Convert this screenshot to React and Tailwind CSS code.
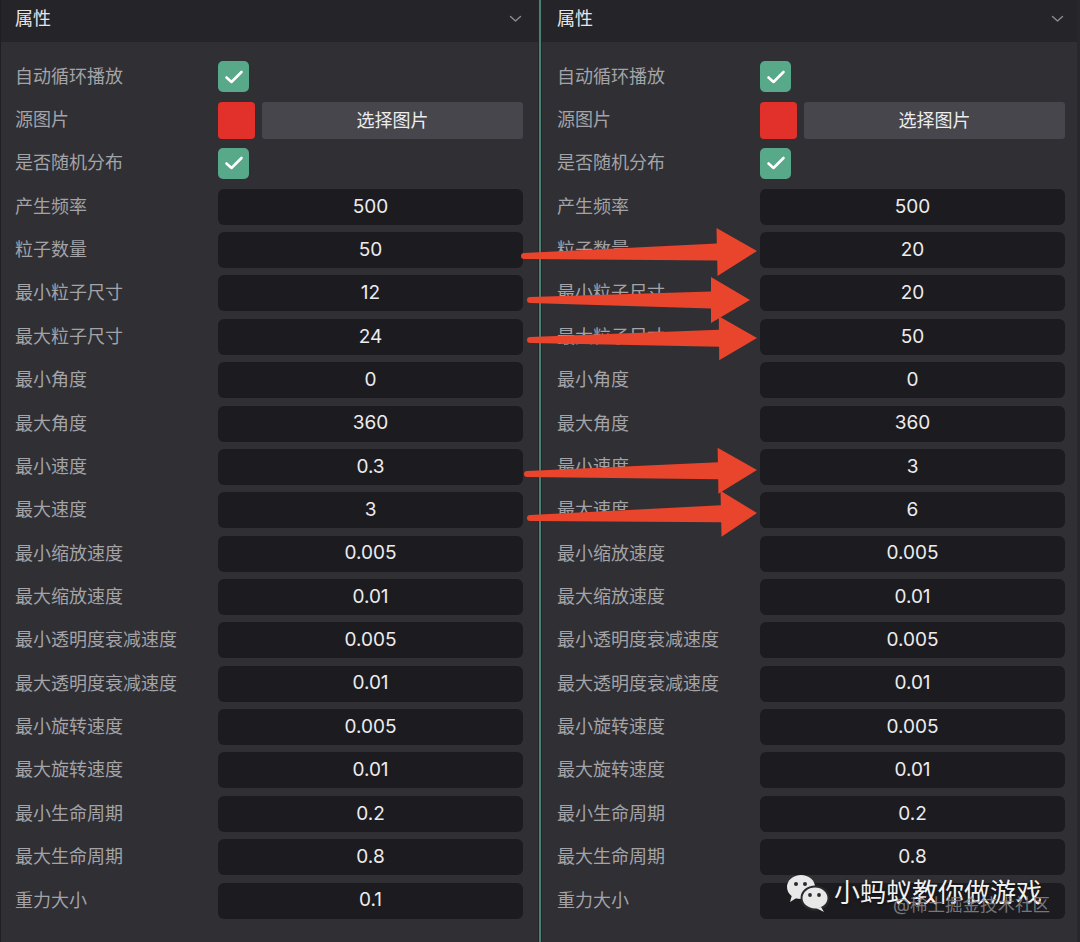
import React from "react";

const labels = [
  "自动循环播放", "源图片", "是否随机分布", "产生频率", "粒子数量", "最小粒子尺寸", "最大粒子尺寸",
  "最小角度", "最大角度", "最小速度", "最大速度", "最小缩放速度", "最大缩放速度",
  "最小透明度衰减速度", "最大透明度衰减速度", "最小旋转速度", "最大旋转速度",
  "最小生命周期", "最大生命周期", "重力大小",
];
const leftVals = [null, null, null, "500", "50", "12", "24", "0", "360", "0.3", "3", "0.005", "0.01", "0.005", "0.01", "0.005", "0.01", "0.2", "0.8", "0.1"];
const rightVals = [null, null, null, "500", "20", "20", "50", "0", "360", "3", "6", "0.005", "0.01", "0.005", "0.01", "0.005", "0.01", "0.2", "0.8", ""];

function Check() {
  return (
    <div className="w-[31px] h-[31px] rounded-[5px] bg-[#58a88a] flex items-center justify-center">
      <svg width="20" height="16" viewBox="0 0 20 16">
        <path d="M2.5 8.5 L7.5 13 L17.5 3" fill="none" stroke="#ffffff" strokeWidth="2.6" strokeLinecap="round" strokeLinejoin="round" />
      </svg>
    </div>
  );
}

function Panel({ vals, right }) {
  return (
    <div className={"w-[538px] shrink-0 flex flex-col bg-[#2f2f34] " + (right ? "border-r-[3px] border-[#28282c]" : "border-l border-[#1f1f23]")}>
      <div className={"h-[42px] bg-[#242429] flex items-center justify-between pb-[5px] " + (right ? "pl-[15px] pr-[13px]" : "pl-[14px] pr-[16px]")}>
        <span className="text-[18px] text-[#e6e6e8]">属性</span>
        <svg width="13" height="8" viewBox="0 0 13 8">
          <path d="M1.5 1.5 L6.5 6 L11.5 1.5" fill="none" stroke="#8c8c92" strokeWidth="1.4" strokeLinecap="round" strokeLinejoin="round" />
        </svg>
      </div>
      <div className={"flex flex-col pt-[13px] " + (right ? "pl-[15px] pr-[12px]" : "pl-[14px] pr-[15px]")}>
        {labels.map((l, i) => (
          <div key={i} className="h-[43.37px] flex items-center">
            <div className="w-[203px] text-[18px] text-[#a3a3a8] whitespace-nowrap leading-none">{l}</div>
            <div className="flex-1 flex items-center">
              {i === 0 || i === 2 ? (
                <Check />
              ) : i === 1 ? (
                <div className="flex-1 flex items-center gap-[7px]">
                  <div className="w-[37px] h-[37px] rounded-[4px] bg-[#e2302a]" />
                  <div className="flex-1 h-[37px] rounded-[3px] bg-[#46464c] flex items-center justify-center text-[18px] text-[#ececee]">选择图片</div>
                </div>
              ) : (
                <div className="flex-1 h-[36px] rounded-[6px] bg-[#1c1c20] flex items-center justify-center text-[19px] text-[#ececee]">{vals[i]}</div>
              )}
            </div>
          </div>
        ))}
      </div>
    </div>
  );
}

function arrowPts(x1, y1, x2, y2, L, H) {
  const dx = x2 - x1, dy = y2 - y1;
  const len = Math.hypot(dx, dy);
  const ux = dx / len, uy = dy / len;
  const nx = -uy, ny = ux;
  const bx = x2 - ux * L, by = y2 - uy * L;
  const t0 = 3, t1 = 8.5;
  const p = [
    [x1 + nx * t0, y1 + ny * t0],
    [bx + nx * t1, by + ny * t1],
    [bx + nx * H, by + ny * H],
    [x2, y2],
    [bx - nx * H, by - ny * H],
    [bx - nx * t1, by - ny * t1],
    [x1 - nx * t0, y1 - ny * t0],
  ];
  return p.map((q) => q[0].toFixed(1) + "," + q[1].toFixed(1)).join(" ");
}

const arrows = [
  [524, 256, 757, 251, 40, 24],
  [530, 300, 750, 300, 39, 23],
  [530, 340, 757, 338, 38, 22],
  [527, 474, 757, 470, 39, 23],
  [530, 518, 757, 513, 36, 23],
];

export default function App() {
  return (
    <div className="relative w-[1080px] h-[942px] overflow-hidden bg-[#2f2f34]" style={{ fontFamily: '"Inter", "Noto Sans CJK SC", sans-serif' }}>
      <div className="flex h-full">
        <Panel vals={leftVals} />
        <div className="w-[4px] shrink-0 flex bg-[#26262a]">
          <div className="w-[1px]" />
          <div className="w-[2px] bg-[#4d7e72]" />
        </div>
        <Panel vals={rightVals} right />
      </div>
      <svg className="absolute inset-0 pointer-events-none" width="1080" height="942">
        {arrows.map((a, i) => (
          <g key={i}>
            <polygon points={arrowPts(...a)} fill="#e9442c" />
            <circle cx={a[0]} cy={a[1]} r="3" fill="#e9442c" />
          </g>
        ))}
      </svg>
      <div className="absolute left-[786px] top-[873px] flex items-center pointer-events-none">
        <svg width="44" height="40" viewBox="0 0 44 40">
          <ellipse cx="15" cy="14" rx="14" ry="12" fill="#e8e8e8" />
          <path d="M6 22 L4 29 L12 24 Z" fill="#e8e8e8" />
          <circle cx="10" cy="11" r="2" fill="#2a2a2e" />
          <circle cx="19" cy="11" r="2" fill="#2a2a2e" />
          <ellipse cx="29" cy="25" rx="13.5" ry="11.5" stroke="#2a2a2e" strokeWidth="2" fill="#e8e8e8" />
          <path d="M35 34 L38 39 L30 35 Z" fill="#e8e8e8" />
          <circle cx="24" cy="22" r="1.9" fill="#2a2a2e" />
          <circle cx="33" cy="22" r="1.9" fill="#2a2a2e" />
        </svg>
        <span className="ml-[4px] text-[26px] text-[#f2f2f2] whitespace-nowrap leading-none" style={{ textShadow: "0 1px 3px rgba(0,0,0,0.6)" }}>小蚂蚁教你做游戏</span>
      </div>
      <div className="absolute left-[893px] top-[896px] text-[17.5px] text-[#8e8e92] whitespace-nowrap leading-none pointer-events-none opacity-80">@稀土掘金技术社区</div>
    </div>
  );
}
